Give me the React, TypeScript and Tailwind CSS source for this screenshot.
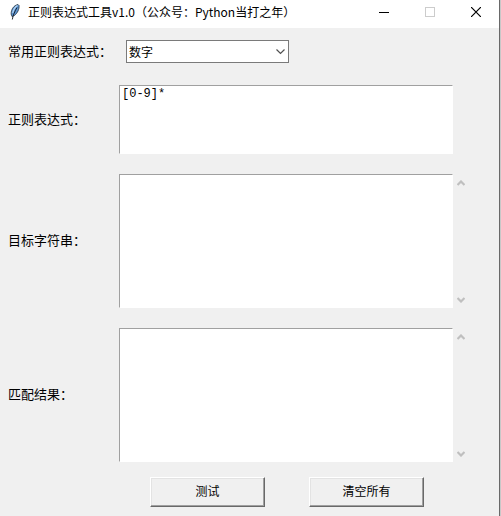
import { useState } from 'react';

const PATTERNS: Record<string, string> = {
  数字: '[0-9]*',
  汉字: '[\\u4e00-\\u9fa5]*',
  邮箱: '\\w+@\\w+\\.\\w+',
};

const LABEL_CLASS = 'shrink-0 pb-0.5 text-[13px] leading-4';
const FIELD_CLASS =
  'min-w-0 flex-1 resize-none overflow-hidden rounded-none border border-t-[#a0a0a0] border-r-white border-b-white border-l-[#a0a0a0] bg-white px-0.5 py-0 font-[Liberation_Mono,Noto_Sans_CJK_SC,monospace] text-xs leading-4 outline-none';
const BUTTON_CLASS =
  'h-[30px] w-[115px] border border-t-white border-r-[#696969] border-b-[#696969] border-l-white bg-[#f0f0f0] pb-0.5 text-xs shadow-[inset_-1px_-1px_0_#a0a0a0,inset_1px_1px_0_#e3e3e3]';

function FeatherIcon() {
  return (
    <svg width="16" height="16" viewBox="0 0 16 16" aria-hidden="true">
      <path d="M11 .5C8 1 5.500 3.500 4.600 6.500C3.900 9 4 11 5 12.500L7.500 11.500C10.500 9 12.500 5 12 1.500Z" fill="#5b93d0" stroke="#26333f" strokeWidth=".8" />
      <path d="M10.500 1.500C8 3 6.500 5.500 5.700 9" fill="none" stroke="#b5d6f5" strokeWidth="1.200" />
      <path d="M10 3.500C8 7 6 11 5.300 15.500" fill="none" stroke="#10161d" strokeWidth=".9" />
    </svg>
  );
}

function ScrollArrows() {
  return (
    <div className="flex w-4 shrink-0 flex-col justify-between">
      <button type="button" aria-label="向上滚动" className="flex h-[18px] items-center justify-center">
        <svg width="8" height="6" viewBox="0 0 8 6">
          <path d="M.5 5L4 1.500L7.500 5" fill="none" stroke="#bfbfbf" strokeWidth="2.200" />
        </svg>
      </button>
      <button type="button" aria-label="向下滚动" className="flex h-4 items-center justify-center">
        <svg width="8" height="6" viewBox="0 0 8 6">
          <path d="M.5 1L4 4.500L7.500 1" fill="none" stroke="#bfbfbf" strokeWidth="2.200" />
        </svg>
      </button>
    </div>
  );
}

function TitleBar() {
  return (
    <header className="flex h-7 items-center bg-white pb-1 pl-[7px]">
      <FeatherIcon />
      <h1 className="ml-[5px] flex-1 text-xs whitespace-nowrap">
        正则表达式工具v1.0（公众号：Python当打之年）
      </h1>
      <button type="button" aria-label="最小化" className="flex h-6 w-[46px] items-center justify-center">
        <svg width="10" height="10" viewBox="0 0 10 10" shapeRendering="crispEdges">
          <path d="M0 5.500H10" stroke="#000" />
        </svg>
      </button>
      <button type="button" aria-label="最大化" disabled className="flex h-6 w-[46px] items-center justify-center">
        <svg width="10" height="10" viewBox="0 0 10 10" shapeRendering="crispEdges">
          <path d="M.5 .5H9.500V9.500H.5Z" fill="none" stroke="#ccc" />
        </svg>
      </button>
      <button type="button" aria-label="关闭" className="flex h-6 w-[46px] items-center justify-center">
        <svg width="10" height="10" viewBox="0 0 10 10">
          <path d="M0 0L10 10M10 0L0 10" stroke="#000" strokeWidth="1.200" />
        </svg>
      </button>
    </header>
  );
}

export default function App() {
  const [preset, setPreset] = useState('数字');
  const [pattern, setPattern] = useState(PATTERNS['数字']);
  const [target, setTarget] = useState('');
  const [result, setResult] = useState('');

  function handlePreset(name: string) {
    setPreset(name);
    setPattern(PATTERNS[name]);
  }

  function handleTest() {
    try {
      const found = target.match(new RegExp(pattern, 'g')) || [];
      setResult(found.filter(Boolean).join('\n'));
    } catch (err) {
      setResult(String(err));
    }
  }

  function handleClear() {
    setPattern('');
    setTarget('');
    setResult('');
  }

  return (
    <div className="min-h-screen border-r border-[#c8c8c8] bg-[#f0f0f0] font-[Noto_Sans_CJK_SC,sans-serif] text-black">
      <div className="min-h-screen border-r border-[#696969]">
        <TitleBar />
        <main className="flex flex-col pt-3 pr-[30px] pb-2 pl-2">
          <div className="flex items-center">
            <label htmlFor="preset" className={`${LABEL_CLASS} w-[118px]`}>常用正则表达式：</label>
            <div className="relative h-[23px] w-[163px]">
              <select
                id="preset"
                value={preset}
                onChange={(e) => handlePreset(e.target.value)}
                className="block h-full w-full appearance-none rounded-none border border-[#7a7a7a] bg-white px-0.5 text-xs outline-none"
              >
                {Object.keys(PATTERNS).map((name) => (
                  <option key={name}>{name}</option>
                ))}
              </select>
              <svg width="9" height="6" viewBox="0 0 9 6" className="pointer-events-none absolute top-[9px] right-1">
                <path d="M.5 .5L4.500 4.500L8.500 .5" fill="none" stroke="#505050" strokeWidth="1.200" />
              </svg>
            </div>
          </div>

          <div className="mt-[22px] flex items-center pr-4">
            <label htmlFor="pattern" className={`${LABEL_CLASS} w-[111px]`}>正则表达式：</label>
            <textarea
              id="pattern"
              value={pattern}
              onChange={(e) => setPattern(e.target.value)}
              className={`${FIELD_CLASS} h-[69px]`}
            />
          </div>

          <div className="mt-5 flex">
            <label htmlFor="target" className={`${LABEL_CLASS} w-[111px] self-center`}>目标字符串：</label>
            <textarea
              id="target"
              value={target}
              onChange={(e) => setTarget(e.target.value)}
              className={`${FIELD_CLASS} h-[134px]`}
            />
            <ScrollArrows />
          </div>

          <div className="mt-5 flex">
            <label htmlFor="result" className={`${LABEL_CLASS} w-[111px] self-center`}>匹配结果：</label>
            <textarea
              id="result"
              value={result}
              onChange={(e) => setResult(e.target.value)}
              className={`${FIELD_CLASS} h-[134px]`}
            />
            <ScrollArrows />
          </div>

          <div className="mt-[15px] flex justify-center gap-11 pr-4 pl-[113px]">
            <button type="button" onClick={handleTest} className={BUTTON_CLASS}>测试</button>
            <button type="button" onClick={handleClear} className={BUTTON_CLASS}>清空所有</button>
          </div>
        </main>
      </div>
    </div>
  );
}
